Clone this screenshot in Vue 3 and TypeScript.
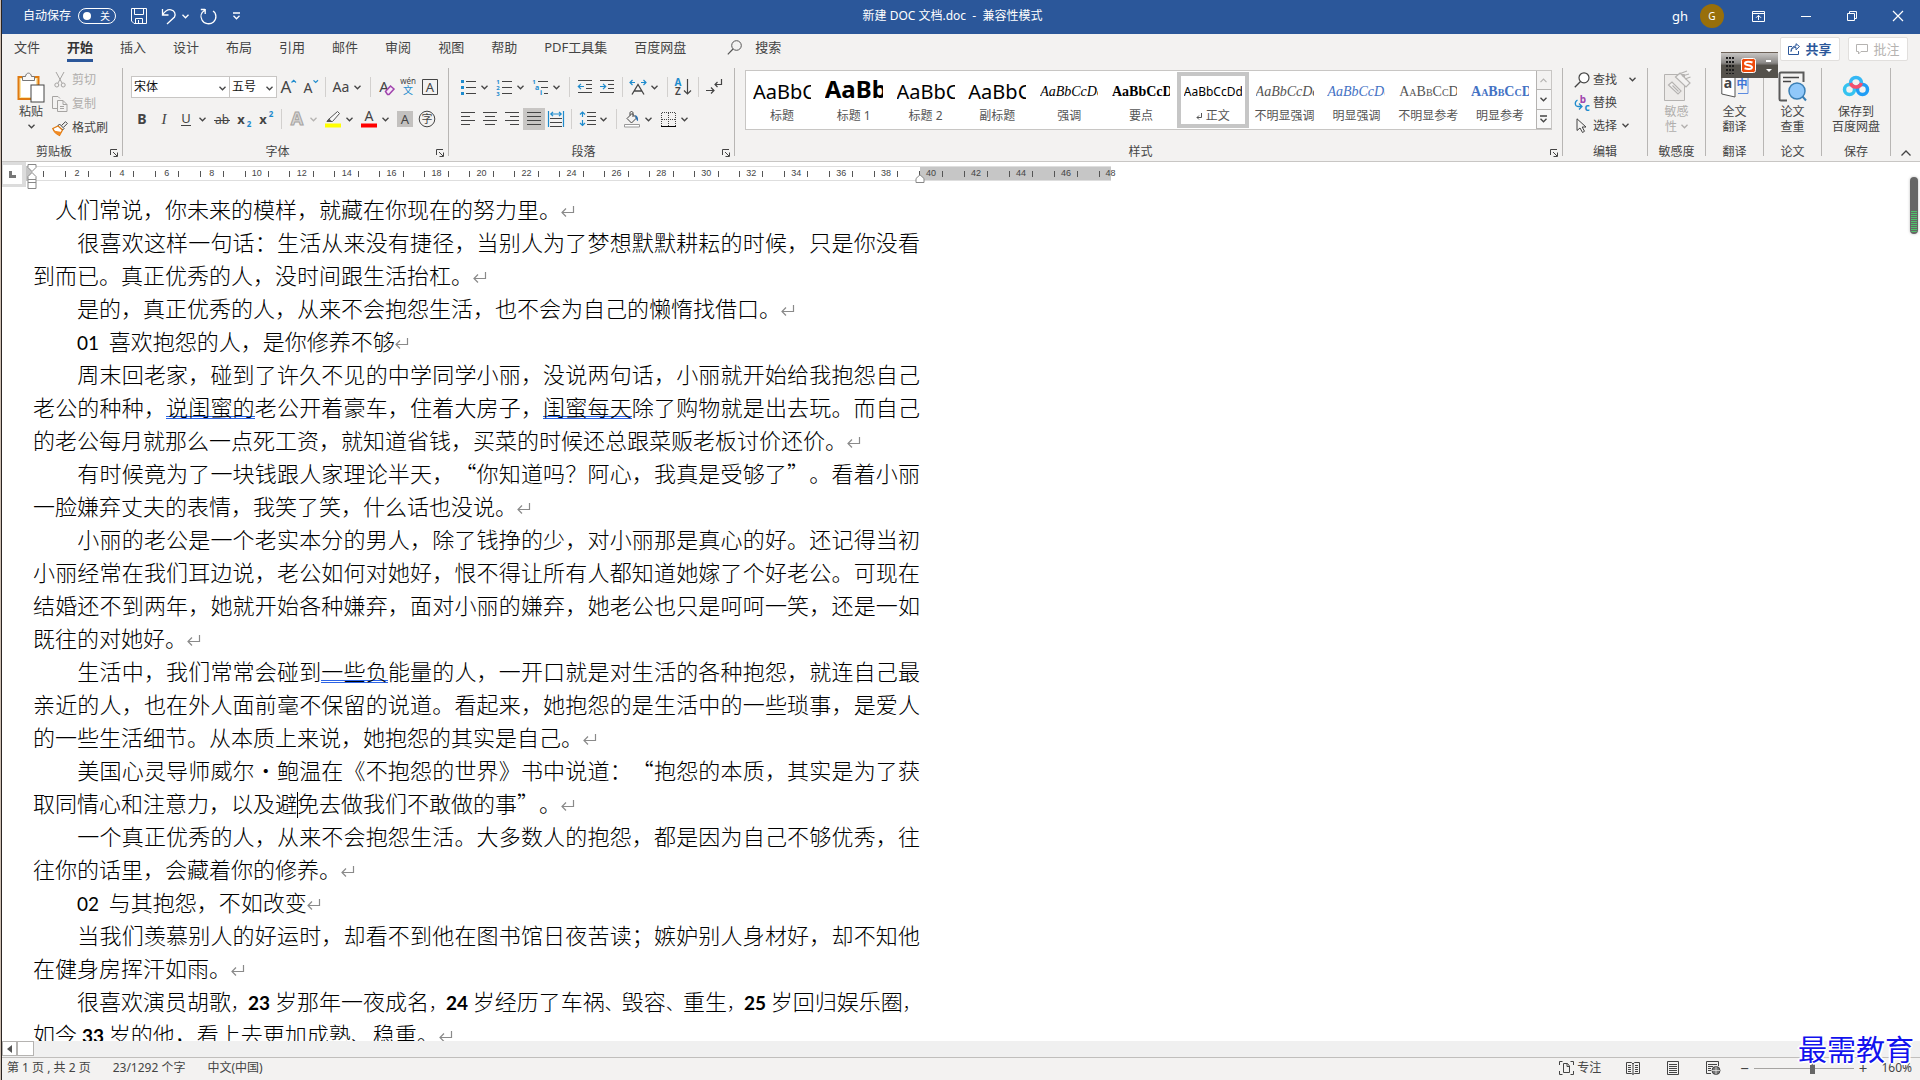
<script setup lang="ts">
import { h, ref } from 'vue'

interface Shape { w: number; h: number; body: string }

const K = '#444'
const B = '#1e8bcd'
const ln = (d: string, c: string = K, w = 1) => `<path d="${d}" fill="none" stroke="${c}" stroke-width="${w}"/>`
const bars = (rows: [number, number, number][]) => rows.map(([x, y, x2]) => ln(`M${x} ${y}.5H${x2}`)).join('')
const glyph = (t: string, x: number, y: number, size: number, c: string = K, extra = '') =>
  `<text x="${x}" y="${y}" font-size="${size}" fill="${c}" text-anchor="middle" font-family="Noto Sans, Noto Sans CJK SC, sans-serif" ${extra}>${t}</text>`

const shapes: Record<string, Shape> = {
  chevron: { w: 7, h: 5, body: ln('M.5 .8L3.5 3.8L6.5 .8', 'currentColor', 1.3) },
  chevronUp: { w: 7, h: 5, body: ln('M.5 4.2L3.5 1.2L6.5 4.2', 'currentColor', 1.2) },
  more: { w: 7, h: 8, body: ln('M0 1H7M.5 3.8L3.5 6.8L6.5 3.8', 'currentColor', 1.3) },
  save: { w: 16, h: 16, body: ln('M.5 .5H15.5V15.5H3L.5 13ZM3.5 .5V6.5H12.5V.5M4.5 15.5V10.5H11.5V15.5M7.5 15V12', '#fff') },
  undo: { w: 16, h: 17, body: ln('M1.5 1V7H7.5M1.5 7C4 3 7 1.3 10 1.8C13.5 2.5 15 6 13.5 9L6 16', '#fff', 1.3) },
  redo: { w: 17, h: 17, body: ln('M5 1.5H.8M5.2 1V6M5 2C1 4.5 0 8.500 2 12C4 16 10 17 13.500 14C17 11 16.500 5 13 3', '#fff', 1.3) },
  display: { w: 13, h: 11, body: ln('M.5 .5H12.5V10.5H.5ZM.5 2.500H12.500M6.500 9V4.500M4 6.800L6.500 4.300L9 6.800', '#fff') },
  minimize: { w: 10, h: 10, body: ln('M0 5.5H10', '#fff') },
  restore: { w: 10, h: 10, body: ln('M.5 2.5H7.5V9.5H.5ZM2.5 2V.5H9.5V7.5H8', '#fff') },
  close: { w: 10, h: 10, body: ln('M0 0L10 10M10 0L0 10', '#fff', 1.2) },
  search: { w: 15, h: 15, body: '<circle cx="9.500" cy="5.500" r="4.800" fill="none" stroke="#555"/>' + ln('M6 9L.8 14.300', '#555', 1.2) },
  share: { w: 12, h: 12, body: ln('M4 3.500H.5V11.500H10.500V8M3 8.500C3.500 5.500 5.500 4.300 8 4.300V6.800L11.500 3.500L8 .7V3C5 3 3 5 3 8.500', '#2b579a') },
  comment: { w: 12, h: 11, body: ln('M.5 .5H11.500V7.500H5L2.500 10V7.500H.5Z', '#b5b3b1') },
  paste: { w: 28, h: 31, body: '<rect x="1.500" y="5" width="20" height="22" fill="#fbe3a5" stroke="#e07a10" stroke-width="2"/><rect x="4" y="7" width="15" height="18" fill="#fff"/><path d="M5.500 8.500V4.500H8.500C9 0 14 0 14.500 4.500H17.500V8.500Z" fill="#f7f7f7" stroke="#777"/><rect x="14" y="13" width="13" height="17" fill="#fff" stroke="#444"/>' },
  cut: { w: 12, h: 16, body: ln('M2 0L8 11M10 0L4 11', '#a6a4a2') + '<circle cx="2.800" cy="13" r="2" fill="none" stroke="#a6a4a2"/><circle cx="9.200" cy="13" r="2" fill="none" stroke="#a6a4a2"/>' },
  copy: { w: 16, h: 16, body: ln('M5 12.500H.5V.5H6L8 2.500M5.500 4.500H11L15 8.500V15.500H5.500ZM11 4.500V8.500H15M8 10.500H12M8 12.500H12', '#a6a4a2') },
  painter: { w: 16, h: 15, body: '<path d="M.8 7.500L6 5L10.500 9L7.500 14.300C5 13 2 11 .8 7.500Z" fill="#fff" stroke="#e07a10" stroke-width="1.300"/><path d="M1.500 9.500L9.500 11L7.500 14.300C5 13.500 2.500 12 1.500 9.500Z" fill="#f08a24"/>' + ln('M6 4.800L7.500 3L12 7.500L10.500 9M9.500 4.500L13.500 .7L15.300 2.500L11.500 6.300') },
  grow: { w: 18, h: 18, body: glyph('A', 7, 15, 17) + ln('M12.500 4.500L14.700 2.300L17 4.500', B, 1.2) },
  shrink: { w: 18, h: 18, body: glyph('A', 7, 15, 14) + ln('M12.500 2.300L14.700 4.500L17 2.300', B, 1.2) },
  caseAa: { w: 20, h: 18, body: glyph('Aa', 10, 14, 14) },
  clear: { w: 18, h: 18, body: glyph('A', 7, 14, 15) + '<path d="M8.500 13.500L13.500 8L17 11L12 16.500H10.500Z" fill="#f6e6f8" stroke="#a045ad" stroke-width="1.500"/>' },
  phonetic: { w: 18, h: 18, body: glyph('wén', 9, 6, 8) + glyph('文', 9, 16, 10, B) },
  boxA: { w: 18, h: 18, body: ln('M1.500 1.500H16.500V16.500H1.500Z') + glyph('A', 9, 14, 13) },
  bold: { w: 18, h: 18, body: glyph('B', 9, 14, 14, K, 'font-weight="700"') },
  italic: { w: 18, h: 18, body: `<text x="9" y="14" font-size="15" fill="${K}" text-anchor="middle" font-style="italic" font-family="Liberation Serif, serif">I</text>` },
  underline: { w: 18, h: 18, body: glyph('U', 9, 13, 13) + ln('M4 15.500H14') },
  strike: { w: 18, h: 18, body: glyph('ab', 9, 14, 12) + ln('M1 10.500H17') },
  sub: { w: 18, h: 18, body: glyph('x', 6, 14, 13, K, 'font-weight="700"') + glyph('2', 14, 17, 8, B, 'font-weight="700"') },
  sup: { w: 18, h: 18, body: glyph('x', 6, 14, 13, K, 'font-weight="700"') + glyph('2', 14, 7, 8, B, 'font-weight="700"') },
  effects: { w: 18, h: 18, body: `<text x="9" y="15" font-size="18" font-weight="700" fill="#d8d6d4" stroke="#a6a4a2" text-anchor="middle" font-family="Noto Sans, sans-serif">A</text>` },
  highlight: { w: 18, h: 18, body: '<path d="M1 17.500V13.500H17V17.500Z" fill="#ff0"/><path d="M5 9L13.500 1.500L15.500 3.500L8.500 11.500H3Z" fill="#f8f8f8" stroke="#555"/><path d="M2.500 11.500L5 8.500L8 11.500Z" fill="#555"/>' },
  color: { w: 18, h: 18, body: glyph('A', 9, 11, 14) + '<path d="M1 13.500H17V17.500H1Z" fill="#f00"/>' },
  shadeA: { w: 18, h: 18, body: '<path d="M1 1H17V17H1Z" fill="#c3c1bf"/>' + glyph('A', 9, 14, 13) },
  circled: { w: 18, h: 18, body: '<circle cx="9" cy="9" r="7.800" fill="none" stroke="#444"/>' + glyph('字', 9, 13, 11) },
  bullets: { w: 16, h: 16, body: bars([[6, 2, 16], [6, 8, 16], [6, 14, 16]]) + `<path d="M1 1h3v3h-3zM1 7h3v3h-3zM1 13h3v3h-3z" fill="${B}"/>` },
  numbers: { w: 16, h: 16, body: bars([[6, 2, 16], [6, 8, 16], [6, 14, 16]]) + glyph('1', 2, 5, 6, B, 'font-weight="700"') + glyph('2', 2, 11, 6, B, 'font-weight="700"') + glyph('3', 2, 17, 6, B, 'font-weight="700"') },
  multi: { w: 16, h: 16, body: bars([[6, 2, 16], [9, 8, 16], [12, 14, 16]]) + glyph('1', 2, 5, 6, B, 'font-weight="700"') + glyph('a', 5, 11, 7, B, 'font-weight="700"') + glyph('i', 9, 16, 7, B, 'font-weight="700"') },
  outdent: { w: 16, h: 16, body: bars([[1, 1, 15], [9, 5, 15], [9, 9, 15], [1, 13, 15]]) + ln('M7 7.500H1.500M4 4.800L1.300 7.500L4 10.200', B, 1.2) },
  indent: { w: 16, h: 16, body: bars([[1, 1, 15], [9, 5, 15], [9, 9, 15], [1, 13, 15]]) + ln('M1 7.500H6.500M4 4.800L6.700 7.500L4 10.200', B, 1.2) },
  asian: { w: 18, h: 16, body: ln('M1 3.500H6M3.500 1L1 3.500L3.500 6M12 3.500H17M14.500 1L17 3.500L14.500 6', B, 1.2) + ln('M3 15.500L9 5.500L15 15.500M5.500 12H12.500', K, 1.3) },
  sort: { w: 18, h: 18, body: glyph('A', 4, 8, 10, B, 'font-weight="700"') + glyph('Z', 4, 17, 10, K, 'font-weight="600"') + ln('M13.500 1V16M10 12.500L13.500 16L17 12.500', K, 1.2) },
  marks: { w: 18, h: 16, body: ln('M16.500 0V5.500H10M12.500 3L10 5.500L12.500 8M1 11.500H9M6 8.500L9 11.500L6 14.500', K, 1.2) },
  alignLeft: { w: 16, h: 14, body: bars([[1, 0, 15], [1, 4, 10], [1, 8, 15], [1, 12, 10]]) },
  alignCenter: { w: 16, h: 14, body: bars([[1, 0, 15], [3, 4, 13], [1, 8, 15], [3, 12, 13]]) },
  alignRight: { w: 16, h: 14, body: bars([[1, 0, 15], [6, 4, 15], [1, 8, 15], [6, 12, 15]]) },
  alignJustify: { w: 16, h: 14, body: bars([[1, 0, 15], [1, 4, 15], [1, 8, 15], [1, 12, 15]]) },
  distribute: { w: 16, h: 16, body: ln('M.5 0V16M15.500 0V16M3 3H13M5 .8L2.800 3L5 5.200M11 .8L13.200 3L11 5.200', B, 1.2) + bars([[2, 7, 14], [2, 11, 14], [2, 15, 14]]) },
  spacing: { w: 17, h: 16, body: ln('M3.500 1V6M1 3.500L3.500 1L6 3.500M3.500 9V15M1 12L3.500 14.500L6 12', B, 1.2) + bars([[8, 1, 17], [8, 5, 17], [8, 9, 17], [8, 13, 17]]) },
  bucket: { w: 16, h: 17, body: ln('M3 7.500L8 2.500L12.500 7L7.500 12ZM6 4.500V2C6 0 9 0 9 2V6') + `<path d="M10.500 4C13 4.500 14.500 6 14 10C12 9.500 12.500 7 10.500 4Z" fill="#2b6fb0"/>` + '<path d="M.5 13.500H15.500V16H.5Z" fill="#fff" stroke="#999"/>' },
  borders: { w: 15, h: 15, body: '<path d="M.5 14V.5H14.500V14M7.500 1V14M1 7.500H14" fill="none" stroke="#444" stroke-dasharray="1 1"/>' + ln('M0 14.500H15', '#000') },
  launcher: { w: 8, h: 8, body: ln('M.5 6V.5H7M3 3L7 7M7.500 3.500V7.500H3.500', K) },
  find: { w: 16, h: 16, body: '<circle cx="10" cy="5.800" r="5" fill="#fff" stroke="#444" stroke-width="1.200"/>' + ln('M6.500 9.500L.8 15.200', K, 1.3) },
  replace: { w: 16, h: 16, body: glyph('b', 9, 8, 10, '#a045ad') + glyph('c', 13, 16, 10, B) + ln('M3.500 5C0 7 1 11.500 4 11.500H7.500M5 8.500L8 11.500L5 14.500', B, 1.3) },
  pointer: { w: 16, h: 15, body: ln('M3 .8V12.500L6 10L8.500 14.500L10.500 13.300L8.200 9H12Z') },
  sensitivity: { w: 28, h: 31, body: '<path d="M1.500 3.500H21.500V29.500H1.500Z" fill="#edebe9" stroke="#b5b3b1"/><g fill="#f3f2f1" stroke="#b5b3b1" stroke-width="1.200"><path d="M5.500 14L9 11L18 20L15 23Z"/><path d="M9.500 14.500L15.500 20.500"/><path d="M12.500 6L17 2L27 12L23 16Z"/><path d="M16 3L24 0M19 5L26 3M22 8L27.500 6"/></g>' },
  translate: { w: 28, h: 24, body: '<path d="M.8 1H14V23L.8 20Z" fill="#fff" stroke="#555"/><path d="M15.500 .5H27V19.500H17" fill="none" stroke="#5b8be0"/>' + glyph('a', 7, 14, 14) + glyph('中', 21, 14, 11, '#3d74d6') },
  paper: { w: 29, h: 31, body: '<path d="M9 29.500H3Q1.500 29.500 1.500 28V3Q1.500 1.500 3 1.500H25.500V11" fill="none" stroke="#5a5a5a" stroke-width="2"/>' + ln('M5 6.500H21M5 10.500H13', '#444', 1.500) + '<circle cx="19" cy="20" r="8" fill="#90c8fa" stroke="#3a7fb5" stroke-width="1.500"/>' + ln('M24.500 25.500L28 29.500', '#3a7fb5', 2) },
  netdisk: { w: 28, h: 24, body: '<circle cx="7.500" cy="15.500" r="5" fill="none" stroke="#35c3f0" stroke-width="3.500"/><circle cx="20.500" cy="15.500" r="5" fill="none" stroke="#209df5" stroke-width="3.500"/><path d="M8.500 9A5.500 5.500 0 1 1 19.500 9" fill="none" stroke="#35b8f5" stroke-width="3.500"/><path d="M8.700 9A5.500 5.500 0 0 0 19.300 9" fill="none" stroke="#f5506e" stroke-width="3.500"/>' },
  collapse: { w: 10, h: 6, body: ln('M.5 5.500L5 1L9.500 5.500', K, 1.3) },
  paraMark: { w: 13, h: 11, body: ln('M12.500 0V6.500H1M5 2.500L1 6.500L5 10.500', '#8a8a8a', 1.2) },
  focus: { w: 15, h: 14, body: ln('M3.500 .5H.5V4M.5 10V13.500H3.500M11.500 .5H14.500V4M14.500 10V13.500H11.500M4.500 2.500H8.500L10.500 5V11.500H4.500ZM8 2.500V5.500H10.500') },
  read: { w: 14, h: 14, body: ln('M.5 1.500H5.500L7 3L8.500 1.500H13.500V12.500H8.500L7 13.500L5.500 12.500H.5ZM7 3V13M2 4.500H5M2 6.500H5M2 8.500H5M2 10.500H5M9 4.500H12M9 6.500H12M9 8.500H12M9 10.500H12') },
  print: { w: 12, h: 14, body: ln('M.5 .5H11.500V13.500H.5ZM2 3.500H10M2 5.500H10M2 7.500H10M2 9.500H10M2 11.500H10') },
  web: { w: 15, h: 14, body: ln('M12.500 5V.5H.5V12.500H5M2 3.500H11M2 5.500H7M2 7.500H5M2 9.500H5') + '<circle cx="10" cy="9.500" r="4" fill="#777" stroke="#444"/>' + ln('M6 9.500H14M10 5.500V13.500', '#f3f2f1', .7) },
  tabStop: { w: 7, h: 7, body: '<path d="M0 0H3V4H7V7H0Z" fill="#777"/>' },
  arrowLeft: { w: 5, h: 8, body: '<path d="M5 0V8L0 4Z" fill="#555"/>' },
  enter: { w: 6, h: 7, body: ln('M5.500 0V4.500H1M3 2.500L1 4.500L3 6.500', '#555') },
  indentLeft: { w: 10, h: 26, body: '<path d="M1 .5H9V3.500L5 7.500L1 3.500ZM1 15.500V12.500L5 8.500L9 12.500V15.500ZM1 15.500H9V24.500H1Z" fill="#fff" stroke="#888"/><path d="M1 18.500H9" stroke="#888"/>' },
  indentRight: { w: 10, h: 9, body: '<path d="M1 8.500V4.500L5 .8L9 4.500V8.500Z" fill="#fff" stroke="#888"/>' },
  sogou: { w: 15, h: 15, body: '<rect x=".5" y=".5" width="14" height="14" rx="2" fill="#f04a0a" stroke="#fff"/><path d="M11.500 4.500C9 3.500 4 3.300 4 5.500C4 7.800 11 6.800 11 9.300C11 11.500 6 11.300 3.500 10.300" fill="none" stroke="#fff" stroke-width="2"/>' },
}

const Icon = (props: { name: string }) => {
  const s = shapes[props.name]
  return h('svg', {
    width: s.w, height: s.h, viewBox: `0 0 ${s.w} ${s.h}`, 'aria-hidden': 'true',
    style: { display: 'block', flex: 'none', overflow: 'visible' }, innerHTML: s.body,
  })
}
Icon.props = ['name']

interface Tool { icon: string; label?: string; kind?: 'sep' | 'chev'; on?: boolean; off?: boolean }
const row = (spec: string): Tool[] => spec.split(' ').map((t) => {
  if (t === '|') return { icon: '', kind: 'sep' }
  if (t[0] === 'v') return { icon: 'chevron', kind: 'chev', off: t === 'v-' }
  return { icon: t.replace('*', ''), on: t.endsWith('*') }
})
const fontTop = row('grow shrink | caseAa v | clear phonetic boxA')
const fontBottom = row('bold italic underline v strike sub sup | effects v- highlight v color v shadeA circled')
const paraTop = row('bullets v numbers v multi v | outdent indent | asian v | sort | marks')
const paraBottom = row('alignLeft alignCenter alignRight alignJustify* distribute | spacing v | bucket v borders v')

const tabs = ['文件', '开始', '插入', '设计', '布局', '引用', '邮件', '审阅', '视图', '帮助', 'PDF工具集', '百度网盘']
const activeTab = ref('开始')

const styleCards = [
  { text: 'AaBbC', name: '标题', cls: 'big' },
  { text: 'AaBb', name: '标题 1', cls: 'huge' },
  { text: 'AaBbC', name: '标题 2', cls: 'big' },
  { text: 'AaBbC', name: '副标题', cls: 'big' },
  { text: 'AaBbCcDd', name: '强调', cls: 'serif em' },
  { text: 'AaBbCcD', name: '要点', cls: 'serif strong' },
  { text: 'AaBbCcDd', name: '正文', cls: 'plain' },
  { text: 'AaBbCcDd', name: '不明显强调', cls: 'serif em soft' },
  { text: 'AaBbCcDd', name: '明显强调', cls: 'serif em blue' },
  { text: 'AaBbCcDd', name: '不明显参考', cls: 'serif caps soft' },
  { text: 'AaBbCcDd', name: '明显参考', cls: 'serif caps strong blue' },
]
const activeStyle = ref('正文')

const rulerMarks = Array.from({ length: 23 }, (_, i) => (i + 1) * 2)

/* [..] marks grammar hints, {..} Latin digits, {!..} heavy digits, <..> compressed punctuation, | the caret */
const paragraphs: string[][] = [
  ['　人们常说，你未来的模样，就藏在你现在的努力里。'],
  ['　　很喜欢这样一句话：生活从来没有捷径，当别人为了梦想默默耕耘的时候，只是你没看', '到而已。真正优秀的人，没时间跟生活抬杠。'],
  ['　　是的，真正优秀的人，从来不会抱怨生活，也不会为自己的懒惰找借口。'],
  ['　　{01}\u00a0 喜欢抱怨的人，是你修养不够'],
  ['　　周末回老家，碰到了许久不见的中学同学小丽，没说两句话，小丽就开始给我抱怨自己', '老公的种种，[说闺蜜的]老公开着豪车，住着大房子，[闺蜜每天]除了购物就是出去玩。而自己', '的老公每月就那么一点死工资，就知道省钱，买菜的时候还总跟菜贩老板讨价还价。'],
  ['　　有时候竟为了一块钱跟人家理论半天，“你知道吗？阿心，我真是受够了”。看着小丽', '一脸嫌弃丈夫的表情，我笑了笑，什么话也没说。'],
  ['　　小丽的老公是一个老实本分的男人，除了钱挣的少，对小丽那是真心的好。还记得当初', '小丽经常在我们耳边说，老公如何对她好，恨不得让所有人都知道她嫁了个好老公。可现在', '结婚还不到两年，她就开始各种嫌弃，面对小丽的嫌弃，她老公也只是呵呵一笑，还是一如', '既往的对她好。'],
  ['　　生活中，我们常常会碰到[一些负]能量的人，一开口就是对生活的各种抱怨，就连自己最', '亲近的人，也在外人面前毫不保留的说道。看起来，她抱怨的是生活中的一些琐事，是爱人', '的一些生活细节。从本质上来说，她抱怨的其实是自己。'],
  ['　　美国心灵导师威尔·鲍温在《不抱怨的世界》书中说道：“抱怨的本质，其实是为了获', '取同情心和注意力，以及避|免去做我们不敢做的事”。'],
  ['　　一个真正优秀的人，从来不会抱怨生活。大多数人的抱怨，都是因为自己不够优秀，往', '往你的话里，会藏着你的修养。'],
  ['　　{02}\u00a0 与其抱怨，不如改变'],
  ['　　当我们羡慕别人的好运时，却看不到他在图书馆日夜苦读；嫉妒别人身材好，却不知他', '在健身房挥汗如雨。'],
  ['　　很喜欢演员胡歌<，>{!23} 岁那年一夜成名<，>{!24} 岁经历了车祸<、>毁容<、>重生<，>{!25} 岁回归娱乐圈<，>', '如今 {!33} 岁的他，看上去更加成熟、稳重。'],
]
const segments = (line: string) => line.split(/(\[[^\]]*\]|\{[^}]*\}|<[^>]*>|\|)/).filter(Boolean).map((s) => {
  if (s === '|') return { text: '', cls: 'caret' }
  if (s[0] === '<') return { text: s.slice(1, -1), cls: 'tight' }
  if (s[0] === '[') return { text: s.slice(1, -1), cls: 'hint' }
  if (s.startsWith('{!')) return { text: s.slice(2, -1), cls: 'num heavy' }
  if (s[0] === '{') return { text: s.slice(1, -1), cls: 'num' }
  return { text: s, cls: '' }
})
const isFull = (p: string[], j: number) => j < p.length - 1 && !p[j].includes('<')

const zoom = ref(59)
</script>

<template>
  <div class="window">
    <header class="titlebar">
      <div class="quick">
        <span>自动保存</span>
        <button class="toggle" aria-label="自动保存"><i></i>关</button>
        <button class="save" aria-label="保存"><Icon name="save" /></button>
        <button class="undo" aria-label="撤消"><Icon name="undo" /><Icon name="chevron" /></button>
        <button class="redo" aria-label="重复"><Icon name="redo" /></button>
        <button aria-label="自定义"><Icon name="more" /></button>
      </div>
      <div>新建 DOC 文档.doc &nbsp;-&nbsp; 兼容性模式</div>
      <div class="win">
        <span>gh</span><span class="avatar">G</span>
        <button aria-label="功能区显示选项"><Icon name="display" /></button>
        <button aria-label="最小化"><Icon name="minimize" /></button>
        <button aria-label="还原"><Icon name="restore" /></button>
        <button aria-label="关闭"><Icon name="close" /></button>
      </div>
    </header>

    <nav class="tabs">
      <button v-for="t in tabs" :key="t" :class="{ active: t === activeTab }" @click="activeTab = t">{{ t }}</button>
      <button class="find-tab"><Icon name="search" />搜索</button>
      <div class="tab-actions">
        <button class="share"><Icon name="share" />共享</button>
        <button class="note" disabled><Icon name="comment" />批注</button>
      </div>
    </nav>

    <section class="ribbon">
      <div class="group clipboard">
        <div class="body">
          <button class="paste"><Icon name="paste" /><span>粘贴</span><Icon name="chevron" /></button>
          <div class="stack">
            <button disabled><b><Icon name="cut" /></b>剪切</button>
            <button disabled><b><Icon name="copy" /></b>复制</button>
            <button><b><Icon name="painter" /></b>格式刷</button>
          </div>
        </div>
        <div class="caption"><span>剪贴板</span><button aria-label="剪贴板设置"><Icon name="launcher" /></button></div>
      </div>

      <div class="group fonts">
        <div class="body rows">
          <div class="tools">
            <label class="combo family"><select aria-label="字体"><option>宋体</option></select><Icon name="chevron" /></label>
            <label class="combo size"><select aria-label="字号"><option>五号</option></select><Icon name="chevron" /></label>
            <template v-for="(t, i) in fontTop" :key="i">
              <i v-if="t.kind === 'sep'" class="sep"></i>
              <button v-else :class="t.kind ?? 'tool'" :aria-label="t.icon"><Icon :name="t.icon" /></button>
            </template>
          </div>
          <div class="tools">
            <template v-for="(t, i) in fontBottom" :key="i">
              <i v-if="t.kind === 'sep'" class="sep"></i>
              <button v-else :class="[t.kind ?? 'tool', { off: t.off }]" :aria-label="t.icon"><Icon :name="t.icon" /></button>
            </template>
          </div>
        </div>
        <div class="caption"><span>字体</span><button aria-label="字体设置"><Icon name="launcher" /></button></div>
      </div>

      <div class="group para">
        <div class="body rows">
          <div v-for="(r, n) in [paraTop, paraBottom]" :key="n" class="tools">
            <template v-for="(t, i) in r" :key="i">
              <i v-if="t.kind === 'sep'" class="sep"></i>
              <button v-else :class="[t.kind ?? 'tool', { on: t.on }]" :aria-label="t.icon"><Icon :name="t.icon" /></button>
            </template>
          </div>
        </div>
        <div class="caption"><span>段落</span><button aria-label="段落设置"><Icon name="launcher" /></button></div>
      </div>

      <div class="group styles">
        <div class="body">
          <div class="gallery">
            <button v-for="s in styleCards" :key="s.name" class="card" :class="{ chosen: s.name === activeStyle }" @click="activeStyle = s.name">
              <span class="sample" :class="s.cls">{{ s.text }}</span>
              <span class="name"><Icon v-if="s.name === '正文'" name="enter" />{{ s.name }}</span>
            </button>
            <div class="pager">
              <button class="off" aria-label="上"><Icon name="chevronUp" /></button>
              <button aria-label="下"><Icon name="chevron" /></button>
              <button aria-label="其他"><Icon name="more" /></button>
            </div>
          </div>
        </div>
        <div class="caption"><span>样式</span><button aria-label="样式设置"><Icon name="launcher" /></button></div>
      </div>

      <div class="group edit">
        <div class="body stack">
          <button><b><Icon name="find" /></b>查找<Icon class="far" name="chevron" /></button>
          <button><b><Icon name="replace" /></b>替换</button>
          <button><b><Icon name="pointer" /></b>选择<Icon name="chevron" /></button>
        </div>
        <div class="caption"><span>编辑</span></div>
      </div>
      <div class="group slim">
        <button class="body large" disabled><b><Icon name="sensitivity" /></b><span>敏感</span><span class="inline">性<Icon name="chevron" /></span></button>
        <div class="caption"><span>敏感度</span></div>
      </div>
      <div class="group slim">
        <button class="body large"><b><Icon name="translate" /></b><span>全文</span><span>翻译</span></button>
        <div class="caption"><span>翻译</span></div>
      </div>
      <div class="group slim">
        <button class="body large"><b><Icon name="paper" /></b><span>论文</span><span>查重</span></button>
        <div class="caption"><span>论文</span></div>
      </div>
      <div class="group disk">
        <button class="body large"><b><Icon name="netdisk" /></b><span>保存到</span><span>百度网盘</span></button>
        <div class="caption"><span>保存</span></div>
      </div>
      <button class="collapse" aria-label="折叠功能区"><Icon name="collapse" /></button>
    </section>

    <div class="ime"><span class="grip"></span><Icon name="sogou" /><span class="ime-menu"><i></i><u></u></span></div>

    <div class="ruler">
      <button class="corner" aria-label="制表符"><Icon name="tabStop" /></button>
      <div class="scale">
        <div class="half"><i></i></div>
        <div v-for="n in rulerMarks" :key="n" class="unit"><i></i><span>{{ n }}</span><i></i></div>
        <div class="half last"><i></i><span>48</span></div>
        <Icon class="mark-left" name="indentLeft" />
        <Icon class="mark-right" name="indentRight" />
      </div>
    </div>

    <main class="document">
      <article lang="zh-CN">
        <p v-for="(p, i) in paragraphs" :key="i">
          <span v-for="(line, j) in p" :key="j" class="line" :class="{ full: isFull(p, j) }"><span v-for="(s, k) in segments(line)" :key="k" :class="s.cls">{{ s.text }}</span><Icon v-if="j === p.length - 1" class="pilcrow" name="paraMark" /></span>
        </p>
      </article>
    </main>
    <div class="level"><i></i></div>

    <div class="hscroll">
      <button aria-label="向左"><Icon name="arrowLeft" /></button><i></i>
    </div>

    <footer class="status">
      <span>第 1 页 , 共 2 页</span><span>23/1292 个字</span><span>中文(中国)</span>
      <div class="views">
        <button class="focus"><Icon name="focus" />专注</button>
        <button aria-label="阅读视图"><Icon name="read" /></button>
        <button aria-label="页面视图"><Icon name="print" /></button>
        <button aria-label="Web 版式"><Icon name="web" /></button>
        <div class="zoom">
          <button aria-label="缩小">−</button>
          <input v-model="zoom" type="range" min="0" max="100" aria-label="缩放" />
          <button aria-label="放大">+</button>
        </div>
        <span class="percent">160%</span>
      </div>
    </footer>
    <div class="brand">最需教育</div>
  </div>
</template>

<style>
body { margin: 0; overflow: hidden; }
</style>

<style scoped>
* { box-sizing: border-box; }
button {
  margin: 0; padding: 0; border: 0; background: none; color: inherit; font: inherit;
  display: flex; align-items: center; white-space: nowrap;
}
.window {
  position: relative; display: flex; flex-direction: column; height: 100vh;
  padding-left: 1px; border-left: 1px solid #cdbdb0; background: #fff;
  box-shadow: inset 1px 0 #2a2422; color: #444;
  font: 12px/16px "Noto Sans", "Noto Sans CJK SC", sans-serif;
}
.titlebar {
  display: grid; grid-template-columns: 1fr auto 1fr; align-items: center; flex: none;
  height: 34px; padding: 0 17px 2px 0; background: #2b579a; color: #fff;
}
.quick { display: flex; align-items: center; padding-left: 21px; }
.toggle {
  justify-content: space-between; width: 38px; height: 16px; margin: 0 15px 0 7px; padding: 0 5px 0 4px;
  border: 1px solid #fff; border-radius: 8px; font-size: 10px; line-height: 14px;
}
.toggle i { width: 8px; height: 8px; border-radius: 50%; background: #fff; }
.save { margin-right: 14px; }
.undo { gap: 5px; margin-right: 11px; }
.redo { margin-right: 16px; }
.win { display: flex; align-items: center; justify-content: flex-end; gap: 36px; }
.win span { margin-right: -24px; font-size: 13px; }
.win .avatar {
  width: 24px; height: 24px; margin-right: -8px; border-radius: 50%; background: #986f0b;
  font-size: 10px; line-height: 24px; text-align: center;
}

.tabs { display: flex; align-items: flex-start; flex: none; height: 34px; padding-left: 12px; background: #f3f2f1; font-size: 13px; }
.tabs > button { height: 28px; margin-right: 27px; padding-top: 1px; border-bottom: 3px solid transparent; }
.tabs > .active { border-color: #2b579a; color: #333; font-weight: 700; }
.tabs > .find-tab { gap: 13px; margin-left: 14px; }
.tab-actions { display: flex; gap: 8px; margin: 3px 12px 0 auto; }
.tab-actions button {
  justify-content: center; gap: 5px; width: 60px; height: 24px;
  border: 1px solid #e1dfdd; border-radius: 2px; background: #fff; font-weight: 700; color: #2b579a;
}
.tab-actions .note { color: #b5b3b1; font-weight: 400; }

.ribbon { display: flex; flex: none; height: 94px; padding-bottom: 5px; border-bottom: 1px solid #c8c6c4; background: #f3f2f1; }
.group { display: flex; flex-direction: column; flex: none; border-right: 1px solid #b8b6b4; }
.body { display: flex; flex: 1; min-height: 0; }
.caption { display: flex; align-items: center; flex: none; height: 8px; line-height: 8px; }
.caption span { flex: 1; text-align: center; }
.caption button { margin: 2px 4px 0; }
.clipboard { width: 121px; }
.fonts { width: 326px; }
.para { width: 286px; }
.styles { flex: 1; min-width: 0; }
.edit { width: 85px; }
.slim { width: 58px; }
.disk { width: 69px; }
button:disabled { color: #b0aeac; }

.paste { align-self: flex-start; flex-direction: column; width: 30px; margin: 4px 0 0 14px; }
.paste span { margin: 1px 0 4px; }
.clipboard .stack { margin-left: 5px; }
.stack { display: flex; flex-direction: column; }
.stack button { height: 24px; gap: 3px; }
.stack b { display: flex; justify-content: center; width: 18px; }
.stack.body { padding-left: 10px; }
.stack.body button { height: 23px; gap: 2px; }
.stack.body button > svg { margin-left: 3px; }
.stack.body button > .far { margin-left: 10px; }

.rows { flex-direction: column; gap: 10px; padding: 8px 0 0 8px; }
.tools { display: flex; align-items: center; height: 22px; }
.tool { justify-content: center; flex: none; width: 22px; height: 22px; }
.tool.on { background: #c8c6c4; }
.chev { justify-content: center; flex: none; width: 11px; height: 22px; }
.off { color: #b5b3b1; }
.sep { flex: none; width: 1px; height: 20px; margin: 0 4px; background: #d2d0ce; }
.chev + .sep { margin-left: 7px; }
.chev + .tool { margin-left: 3px; }
.combo { display: flex; align-items: center; position: relative; height: 22px; border: 1px solid #c8c6c4; background: #fff; color: #444; }
.combo.family { width: 99px; }
.combo.size { width: 48px; margin-left: -1px; }
.combo svg { position: absolute; right: 3px; top: 9px; pointer-events: none; }
select { width: 100%; height: 20px; padding: 0 2px; border: 0; background: none; color: #111; appearance: none; font: inherit; }

.styles .body { padding: 2px 10px 0; }
.gallery { display: flex; width: 100%; height: 60px; border: 1px solid #c8c6c4; background: #fff; overflow: hidden; }
.card { flex: 1; flex-direction: column; min-width: 0; height: 56px; margin-top: 1px; }
.card.chosen { box-shadow: inset 0 0 0 4px #c6c6c6; }
.sample { width: 58px; height: 32px; margin-top: 4px; overflow: hidden; text-align: left; line-height: 32px; color: #000; }
.big { font-size: 20px; }
.huge { font-size: 24px; font-weight: 700; line-height: 26px; }
.plain { font-size: 12px; }
.serif { font-family: "Liberation Serif", serif; font-size: 14px; }
.em { font-style: italic; }
.strong { font-weight: 700; }
.caps { font-variant: small-caps; }
.soft { color: #555; }
.blue { color: #4472c4; }
.name { display: flex; align-items: center; gap: 4px; color: #555; }
.pager { display: flex; flex-direction: column; flex: none; width: 15px; }
.pager button { flex: 1; justify-content: center; border: 1px solid #b5b3b1; border-width: 0 0 1px 1px; background: #f8f8f8; }
.pager .off { background: #f3f2f1; }

.large { flex-direction: column; align-items: center; line-height: 15px; }
.large b { display: flex; align-items: center; height: 32px; margin: 2px 0; }
.large .inline { display: flex; align-items: center; gap: 4px; }
.collapse { align-self: flex-end; justify-content: center; flex: none; width: 29px; }

.ime {
  position: absolute; right: 142px; top: 52px; z-index: 2; display: flex; align-items: center; gap: 7px;
  width: 57px; height: 26px; padding: 0 5px; border-top: 1px solid #6d6258;
  background: linear-gradient(#c8c6c4, #8a8886 40%, #55524c 50%, #55524c);
}
.grip { width: 8px; height: 17px; background: radial-gradient(circle at 1px 1px, #1c1c1c 1px, transparent 1px) 0 0 / 3px 4px; }
.ime-menu { display: flex; flex-direction: column; gap: 7px; margin-left: 3px; }
.ime-menu i { width: 5px; height: 2px; background: #fff; }
.ime-menu u { border: 3px solid transparent; border-top-color: #fff; border-bottom: 0; }

.ruler { display: flex; flex: none; height: 30px; }
.corner { justify-content: center; width: 24px; height: 25px; border: 3px solid #dcdcdc; border-left-width: 1px; border-right-width: 4px; background: #fff; }
.scale {
  position: relative; display: flex; width: 1079px; height: 15px; margin: 4px 0 0 6px;
  border: solid #dedede; border-width: 1px 0; box-shadow: -6px 0 #c6c6c6;
  background: linear-gradient(to right, #fff 82.3%, #c6c6c6 82.3%);
  font: 9px/13px "Liberation Sans", sans-serif;
}
.unit { display: grid; grid-template-columns: 1fr 2fr 1fr; align-items: center; flex: 2; min-width: 0; text-align: center; }
.scale i { flex: none; width: 1px; height: 6px; background: #555; }
.unit i:first-child { justify-self: end; }
.half { display: flex; align-items: center; justify-content: center; flex: 1; min-width: 0; }
.half.last { justify-content: flex-start; gap: 5px; }
.half.last i { margin-left: 11px; }
.mark-left { position: absolute; left: -5px; top: -3px; }
.mark-right { position: absolute; left: 883px; top: 7px; }

.document { flex: 1; min-height: 0; overflow: hidden; }
article { width: 887px; margin-left: 31px; color: #000; font: 300 22px/33px "Noto Sans CJK SC", sans-serif; text-spacing-trim: space-all; }
p { margin: 0; }
.line { display: block; height: 33px; white-space: nowrap; }
.line.full { text-align-last: justify; white-space: normal; }
.pilcrow { display: inline-block !important; vertical-align: 1px; }
.hint {
  background: linear-gradient(#2b63e6 1px, transparent 1px 2px, #2b63e6 2px) 0 calc(100% - 3px) / 100% 3px no-repeat;
}
.num { font-family: Lato, sans-serif; font-size: 19px; font-weight: 400; }
.heavy { font-weight: 700; }
.tight { font-size: 17px; }
.caret { display: inline-block; width: 1px; height: 26px; margin-right: -1px; background: #000; vertical-align: -6px; }
.level {
  position: absolute; right: 2px; top: 177px; display: flex; align-items: flex-end;
  width: 8px; height: 57px; border-radius: 4px; background: #666; box-shadow: 0 0 3px #bbb;
}
.level i { width: 6px; height: 22px; margin: 0 1px 1px; border-radius: 0 0 3px 3px; background: repeating-linear-gradient(#4fc36a 0 1px, #666 1px 2px); }

.hscroll { display: flex; flex: none; height: 16px; background: #f0f0f0; }
.hscroll button { justify-content: center; width: 15px; height: 15px; border: 1px solid #b5b3b1; background: #fff; }
.hscroll > i { width: 17px; height: 15px; border: 1px solid #b5b3b1; background: #fff; }

.status { display: flex; align-items: center; gap: 22px; flex: none; height: 23px; padding: 0 8px 2px 5px; border-top: 1px solid #c0bebc; background: #f3f2f1; }
.views { display: flex; align-items: center; gap: 27px; margin-left: auto; }
.focus { gap: 3px; margin-right: -2px; }
.zoom { display: flex; align-items: center; gap: 5px; margin: 0 -13px 0 -8px; font-size: 15px; }
.zoom input { width: 100px; height: 16px; margin: 0; appearance: none; background: linear-gradient(#a6a4a2, #a6a4a2) center / 100% 1px no-repeat; }
.zoom input::-webkit-slider-thumb { appearance: none; width: 5px; height: 11px; background: #666; }
.brand {
  position: absolute; right: 6px; bottom: 15px; color: #1212ee; font: 400 29px/34px "Noto Sans CJK SC", sans-serif;
  text-shadow: -2px 0 #fff, 2px 0 #fff, 0 -2px #fff, 0 2px #fff, 1px 1px #fff, -1px -1px #fff;
}
</style>
